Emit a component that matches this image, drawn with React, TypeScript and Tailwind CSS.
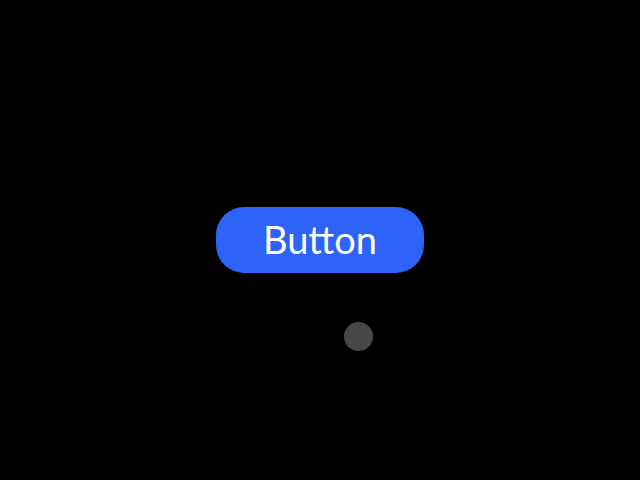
export default function App() {
  return (
    <div className="relative flex h-[480px] w-[640px] items-center justify-center bg-black">
      <button className="flex h-[66px] w-[208px] items-center justify-center rounded-[28px] bg-[#2d63f6] pb-[2px] font-['Lato',sans-serif] text-[38px] font-normal text-white">
        Button
      </button>
      <div className="absolute left-[344px] top-[322px] h-[29px] w-[29px] rounded-full bg-[#474747]" />
    </div>
  )
}
